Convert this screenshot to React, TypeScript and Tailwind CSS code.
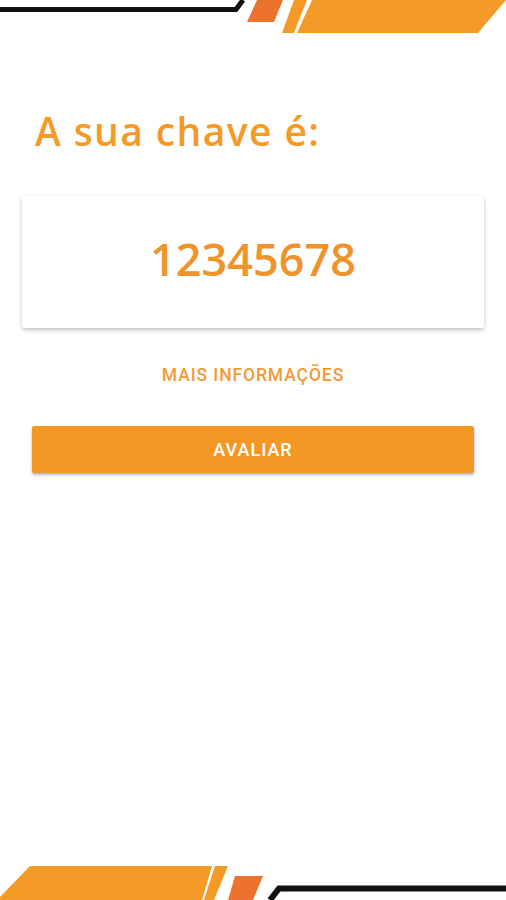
import React from 'react';

function TopDecor() {
  return (
    <svg width="506" height="34" viewBox="0 0 506 34" className="block">
      <polyline points="0,9.5 236,9.5 243,0" fill="none" stroke="#111111" strokeWidth="5" />
      <polygon points="257,0 283,0 274,22 247,22" fill="#EC722E" />
      <polygon points="294,0 307,0 294,33 282,33" fill="#F39A27" />
      <polygon points="312,0 506,0 478,33 297,33" fill="#F39A27" />
    </svg>
  );
}

function BottomDecor() {
  return (
    <svg width="506" height="34" viewBox="0 0 506 34" className="block">
      <polygon points="30,0 212,0 202,34 0,34 0,31" fill="#F39A27" />
      <polygon points="215,0 228,0 214,34 204,34" fill="#F39A27" />
      <polygon points="235,10 263,10 253,34 228,34" fill="#EC722E" />
      <polyline points="270,34 279,22.5 506,22.5" fill="none" stroke="#111111" strokeWidth="6" />
    </svg>
  );
}

export default function App() {
  return (
    <div className="w-[506px] h-[900px] bg-white flex flex-col overflow-hidden">
      <TopDecor />

      <div className="flex-1 flex flex-col">
        {/* Title */}
        <h1 className="mt-[73px] ml-[35px] text-[39px] leading-[48px] font-semibold tracking-[1.4px] text-[#F39A27] font-['Open_Sans',sans-serif]">
          A sua chave é:
        </h1>

        {/* Key card */}
        <div className="mt-[41px] mx-[22px] h-[132px] bg-white rounded-[3px] shadow-[0_2px_4px_rgba(0,0,0,0.25)] flex items-center justify-center">
          <span className="-mt-[6px] text-[45px] font-semibold text-[#F0932B] font-['Open_Sans',sans-serif]">
            12345678
          </span>
        </div>

        {/* Mais informações */}
        <div className="mt-[34px] flex justify-center">
          <span className="text-[17.5px] font-medium tracking-[0.9px] text-[#F29A36] font-['Roboto',sans-serif]">
            MAIS INFORMAÇÕES
          </span>
        </div>

        {/* Avaliar */}
        <div className="mt-[38px] mx-[32px]">
          <button className="w-full h-[47px] bg-[#F39824] rounded-[2px] shadow-[0_2px_3px_rgba(0,0,0,0.3)] text-white text-[18px] font-medium tracking-[1px] font-['Roboto',sans-serif]">
            AVALIAR
          </button>
        </div>
      </div>

      <BottomDecor />
    </div>
  );
}
